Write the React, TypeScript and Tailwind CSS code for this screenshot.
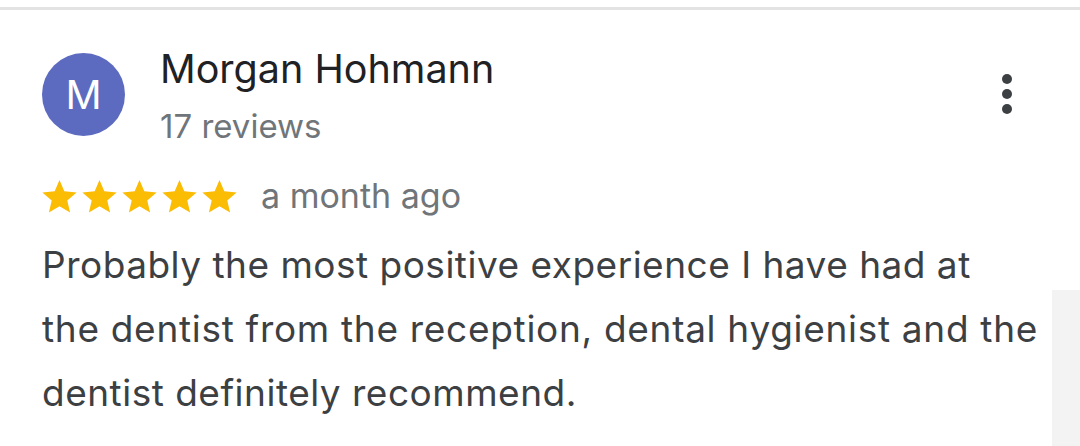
import React from "react";

function Star() {
  return (
    <svg viewBox="2 2 20 19.27" className="w-[35px] h-[33px]" fill="#fbbc04">
      <path d="M12 17.27L18.18 21l-1.64-7.03L22 9.24l-7.19-.61L12 2 9.19 8.63 2 9.24l5.46 4.73L5.82 21z" />
    </svg>
  );
}

export default function App() {
  return (
    <div className="w-[1080px] h-[446px] bg-white overflow-hidden relative" style={{ fontFamily: "Inter, Roboto, sans-serif" }}>
      <div className="h-[7px]" />
      <div className="h-[3px] bg-[#e3e3e3]" />
      <div className="pl-[42px] pr-[40px] pt-[37px]">
        <div className="flex items-start">
          <div className="mt-[6px] w-[83px] h-[83px] rounded-full bg-[#5c6bc0] flex items-center justify-center text-white text-[40px] leading-none shrink-0">
            M
          </div>
          <div className="ml-[35px] flex-1">
            <div className="text-[39.5px] leading-[44px] text-[#202124]">Morgan Hohmann</div>
            <div className="text-[33px] leading-[40px] text-[#70757a] mt-[15px]">17 reviews</div>
          </div>
          <div className="flex flex-col gap-[5px] mt-[27px] mr-[28px]">
            <span className="w-[10px] h-[10px] rounded-full bg-[#3c4043]" />
            <span className="w-[10px] h-[10px] rounded-full bg-[#3c4043]" />
            <span className="w-[10px] h-[10px] rounded-full bg-[#3c4043]" />
          </div>
        </div>
        <div className="flex items-center mt-[30px] h-[40px]">
          <div className="flex gap-[5px]">
            <Star />
            <Star />
            <Star />
            <Star />
            <Star />
          </div>
          <span className="ml-[24px] text-[34px] leading-[40px] text-[#70757a]">a month ago</span>
        </div>
        <p className="mt-[17px] text-[37px] leading-[64px] tracking-[0.5px] text-[#3c4043] whitespace-nowrap">
          Probably the most positive experience I have had at
          <br />
          <span className="tracking-[0.7px]">the dentist from the reception, dental hygienist and the</span>
          <br />
          dentist definitely recommend.
        </p>
      </div>
      <div className="absolute right-0 top-[290px] bottom-0 w-[28px] bg-[#f3f3f3]" />
    </div>
  );
}
